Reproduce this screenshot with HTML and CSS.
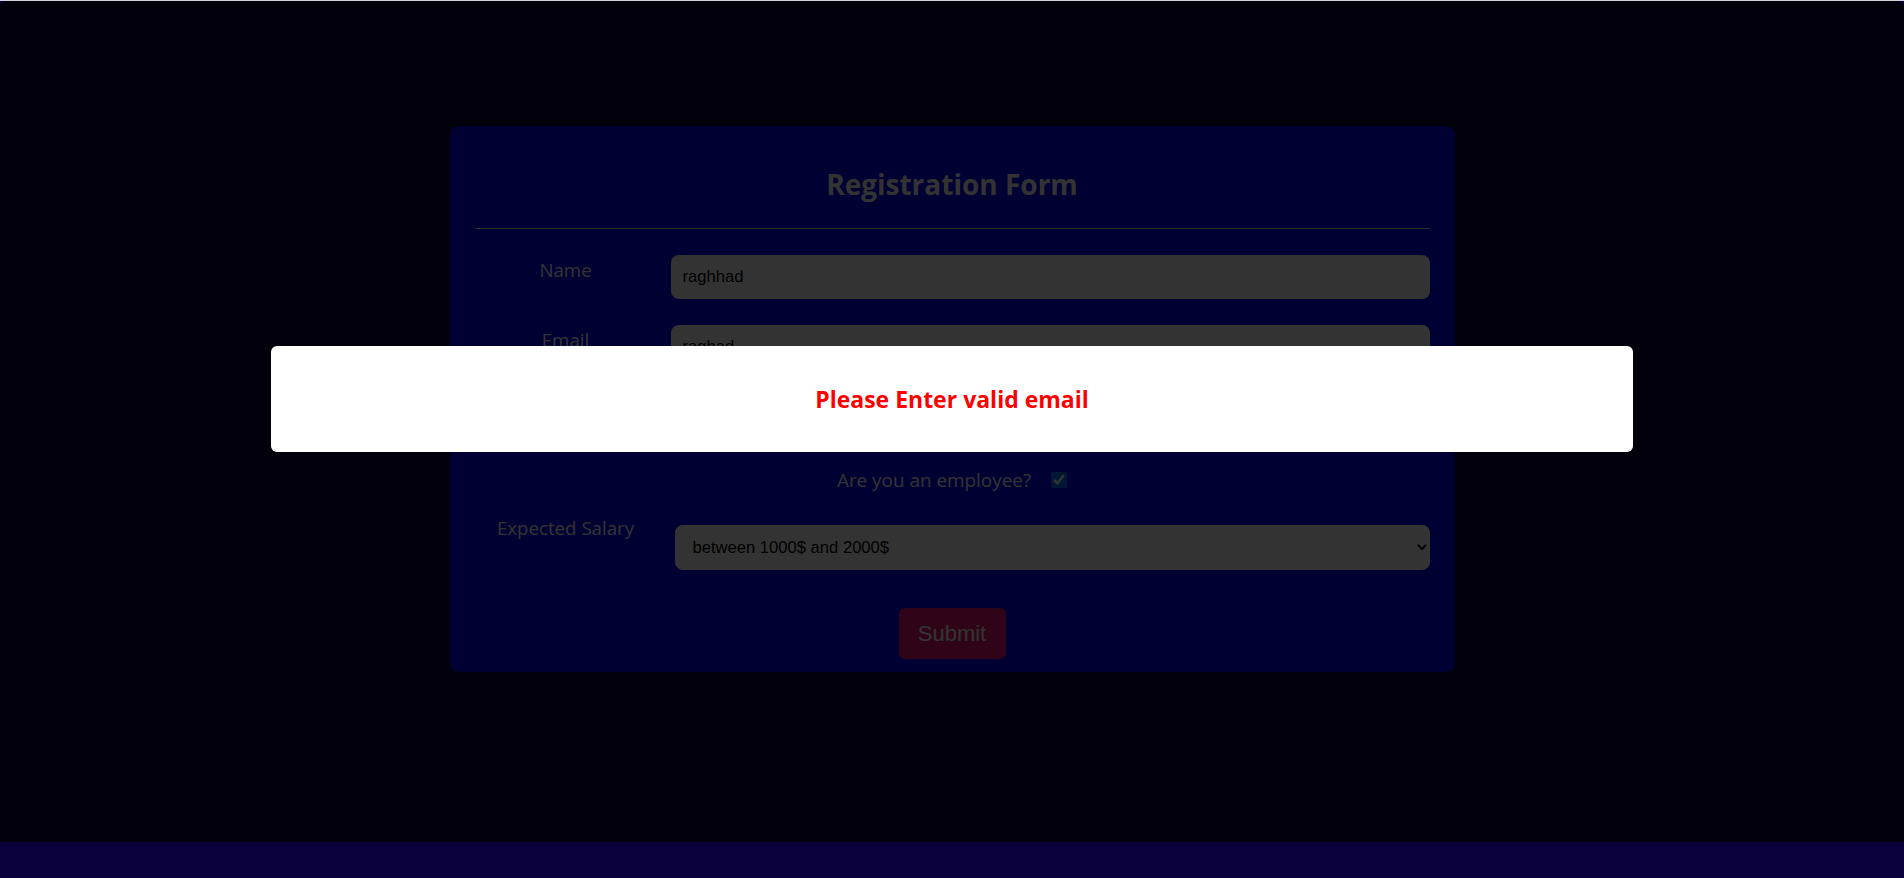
FILE: index.html
```html
<!DOCTYPE html>
<html lang="en">
<head>
<meta charset="utf-8">
<title>Registration Form</title>
<link rel="stylesheet" href="styles.css">
</head>
<body>
<div class="top-line"></div>
<main class="page">
  <form class="card">
    <h2 class="title">Registration Form</h2>
    <hr class="divider">
    <div class="row">
      <label class="label">Name</label>
      <input class="field" type="text" value="raghhad">
    </div>
    <div class="row">
      <label class="label">Email</label>
      <input class="field" type="text" value="raghad">
    </div>
    <div class="row">
      <label class="label">Password</label>
      <input class="field" type="password" value="12345678">
    </div>
    <div class="check-row">
      <span class="label-inline">Are you an employee?</span>
      <input class="check" type="checkbox" checked>
    </div>
    <div class="row salary-row">
      <label class="label">Expected Salary</label>
      <select class="select">
        <option>between 1000$ and 2000$</option>
      </select>
    </div>
    <div class="actions">
      <button class="submit" type="button">Submit</button>
    </div>
  </form>
</main>
<div class="backdrop">
  <div class="modal">
    <p class="modal-text">Please Enter valid email</p>
  </div>
</div>
</body>
</html>
```
FILE: styles.css
```css
html, body {
  margin: 0;
  padding: 0;
}
body {
  background: #0a003a;
  font-family: "Open Sans", "Noto Sans", sans-serif;
  height: 878px;
  overflow: hidden;
  position: relative;
}
.top-line {
  position: absolute;
  top: 0;
  left: 0;
  right: 0;
  height: 1px;
  background: #d4d4d8;
}
.page {
  padding-top: 126px;
  display: flex;
  justify-content: center;
}
.card {
  width: 1005px;
  box-sizing: border-box;
  background: #0000ff;
  border-radius: 9px;
  padding: 40px 25px 13px;
  display: flex;
  flex-direction: column;
}
.title {
  margin: 0;
  text-align: center;
  color: #fff;
  font-size: 28px;
  line-height: 36px;
  font-weight: 700;
}
.divider {
  margin: 26px 0 0;
  border: 0;
  border-top: 1px solid #e0e0e0;
  height: 0;
}
.row {
  display: grid;
  grid-template-columns: 182px 1fr;
  column-gap: 14px;
  align-items: start;
  margin-top: 26px;
}
.label {
  color: #fff;
  font-size: 18.7px;
  line-height: 24px;
  text-align: center;
  padding-top: 3px;
}
.field {
  height: 44px;
  box-sizing: border-box;
  border: 0;
  border-radius: 8px;
  background: #fff;
  color: #000;
  font-family: "Liberation Sans", Arial, sans-serif;
  font-size: 16.6px;
  padding: 0 12px;
  outline: none;
}
.check-row {
  margin-top: 29px;
  display: flex;
  justify-content: center;
  align-items: center;
  gap: 20px;
  height: 24px;
}
.label-inline {
  color: #fff;
  font-size: 18.9px;
  line-height: 24px;
}
.check {
  width: 16px;
  height: 16px;
  margin: 0;
}
.salary-row {
  margin-top: 24px;
}
.salary-row .label {
  padding-top: 0;
}
.select {
  margin-top: 9px;
  margin-left: 4px;
  height: 45px;
  border: 0;
  border-radius: 8px;
  background: #fff;
  color: #000;
  font-family: "Liberation Sans", Arial, sans-serif;
  font-size: 16.6px;
  padding: 0 14px;
}
.actions {
  margin-top: 38px;
  display: flex;
  justify-content: center;
}
.submit {
  width: 107px;
  height: 51px;
  border: 0;
  border-radius: 6px;
  background: #e8147d;
  color: #fff;
  font-family: "Liberation Sans", Arial, sans-serif;
  font-size: 22px;
}
.backdrop {
  position: absolute;
  top: 1px;
  left: 0;
  right: 0;
  height: 841px;
  background: rgba(0, 0, 0, 0.8);
  border-radius: 6px 6px 0 0;
  display: flex;
  justify-content: center;
  align-items: flex-start;
}
.modal {
  margin-top: 345px;
  width: 1362px;
  height: 106px;
  background: #fff;
  border-radius: 6px;
  display: flex;
  align-items: center;
  justify-content: center;
}
.modal-text {
  margin: 0;
  color: #ff0000;
  font-weight: 700;
  font-size: 23px;
  line-height: 30px;
}
```
